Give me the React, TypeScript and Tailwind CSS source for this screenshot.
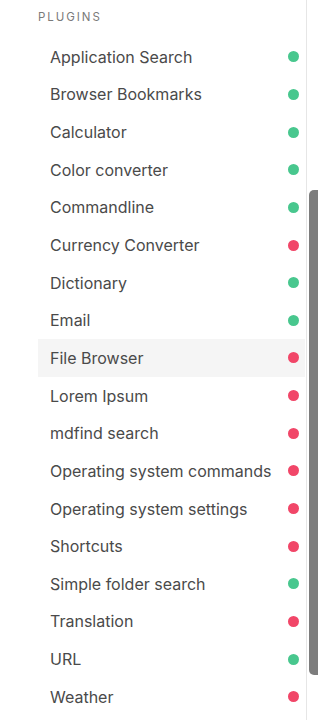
const plugins: { name: string; enabled: boolean }[] = [
  { name: "Application Search", enabled: true },
  { name: "Browser Bookmarks", enabled: true },
  { name: "Calculator", enabled: true },
  { name: "Color converter", enabled: true },
  { name: "Commandline", enabled: true },
  { name: "Currency Converter", enabled: false },
  { name: "Dictionary", enabled: true },
  { name: "Email", enabled: true },
  { name: "File Browser", enabled: false },
  { name: "Lorem Ipsum", enabled: false },
  { name: "mdfind search", enabled: false },
  { name: "Operating system commands", enabled: false },
  { name: "Operating system settings", enabled: false },
  { name: "Shortcuts", enabled: false },
  { name: "Simple folder search", enabled: true },
  { name: "Translation", enabled: false },
  { name: "URL", enabled: true },
  { name: "Weather", enabled: false },
];

export default function App() {
  return (
    <div
      className="flex h-[720px] w-[318px] overflow-hidden bg-white text-[#4a4a4a]"
      style={{ fontFamily: "Inter, 'Noto Sans', sans-serif" }}
    >
      <aside className="flex-1 pl-[38px] pr-px">
        <p className="h-[38px] pt-[10px] text-[11.5px] leading-[14px] uppercase tracking-[0.17em] text-[#7a7a7a]">
          Plugins
        </p>
        <ul>
          {plugins.map((p) => (
            <li
              key={p.name}
              className={
                "flex h-[37.65px] items-center justify-between pl-3 pr-[6px] " +
                (p.name === "File Browser" ? "bg-[#f5f5f5]" : "")
              }
            >
              <span className="text-[16px] leading-6 whitespace-nowrap">{p.name}</span>
              <span
                className={
                  "h-[11px] w-[11px] rounded-full " +
                  (p.enabled ? "bg-[#48c78e]" : "bg-[#f14668]")
                }
              />
            </li>
          ))}
        </ul>
      </aside>
      <div className="w-[12px] border-l border-[#e6e6e6] pt-[190px] pl-[2px]">
        <div className="h-[485px] w-full rounded-l-[5px] bg-[#7d7d7d]" />
      </div>
    </div>
  );
}
